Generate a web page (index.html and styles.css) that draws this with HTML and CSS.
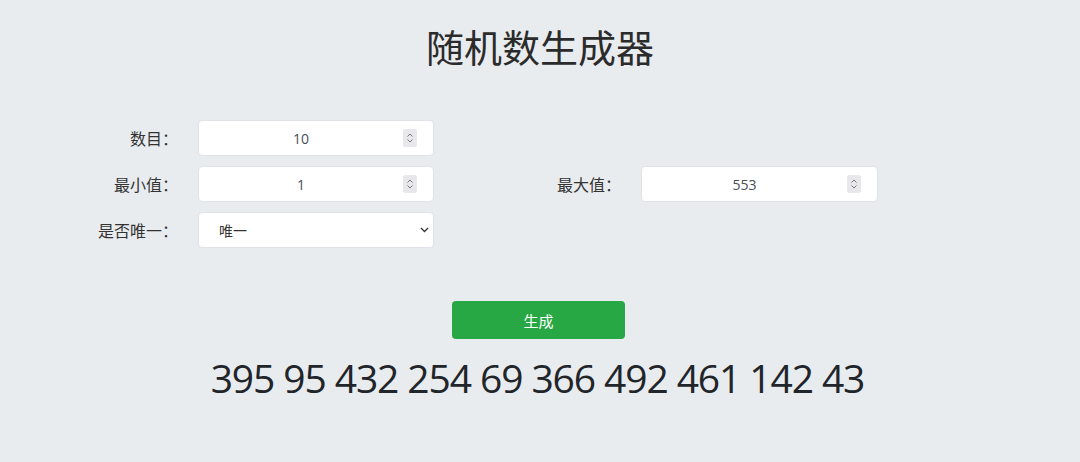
FILE: index.html
```html
<!DOCTYPE html>
<html lang="zh-CN">
<head>
    <meta charset="UTF-8">
    <meta name="viewport" content="width=device-width, initial-scale=1.0">
    <title>随机数生成器</title>
    <link rel="stylesheet" href="styles.css">
</head>
<body>
    <div class="page">
        <h1>随机数生成器</h1>

        <form class="options">
            <label class="label">数目：</label>
            <div class="box">
                <input type="text" class="num" value="10">
                <span class="spin">
                    <svg width="8" height="12" viewBox="0 0 8 12"><path d="M1.5 4.5 L4 2 L6.5 4.5 M1.5 7.5 L4 10 L6.5 7.5" fill="none" stroke="#7a7a7a" stroke-width="1"/></svg>
                </span>
            </div>

            <label class="label">最小值：</label>
            <div class="box">
                <input type="text" class="num" value="1">
                <span class="spin">
                    <svg width="8" height="12" viewBox="0 0 8 12"><path d="M1.5 4.5 L4 2 L6.5 4.5 M1.5 7.5 L4 10 L6.5 7.5" fill="none" stroke="#7a7a7a" stroke-width="1"/></svg>
                </span>
            </div>

            <label class="label right">最大值：</label>
            <div class="box">
                <input type="text" class="num" value="553">
                <span class="spin">
                    <svg width="8" height="12" viewBox="0 0 8 12"><path d="M1.5 4.5 L4 2 L6.5 4.5 M1.5 7.5 L4 10 L6.5 7.5" fill="none" stroke="#7a7a7a" stroke-width="1"/></svg>
                </span>
            </div>

            <label class="label">是否唯一：</label>
            <div class="box select-box">
                <span class="select-value">唯一</span>
                <svg width="9" height="6" viewBox="0 0 9 6"><path d="M1 1 L4.5 4.5 L8 1" fill="none" stroke="#333" stroke-width="1.3"/></svg>
            </div>
        </form>

        <div class="actions">
            <button type="button" class="btn-generate">生成</button>
        </div>

        <div class="result">395 95 432 254 69 366 492 461 142 43</div>
    </div>
</body>
</html>
```

FILE: styles.css
```css
body {
    margin: 0;
    padding: 0;
    background-color: #e9ecef;
    font-family: "Open Sans", "Noto Sans CJK SC", sans-serif;
    color: #333;
}

.page {
    width: 1080px;
    height: 462px;
    overflow: hidden;
}

h1 {
    margin: 23px 0 51px;
    text-align: center;
    font-family: "Noto Sans CJK SC", sans-serif;
    font-weight: 400;
    font-size: 38px;
    line-height: 46px;
    color: #2b2b2b;
}

.options {
    display: grid;
    grid-template-columns: 166px 236px 207px 237px;
    grid-auto-rows: 36px;
    row-gap: 10px;
    margin-left: 32px;
}

.label {
    grid-column: 1;
    padding-right: 20px;
    text-align: right;
    font-family: "Noto Sans CJK SC", sans-serif;
    font-size: 16px;
    line-height: 36px;
    color: #333;
}

.label.right {
    grid-column: 3;
}

.box {
    display: flex;
    align-items: center;
    background: #fff;
    border: 1px solid #dfe2e6;
    border-radius: 4px;
    box-sizing: border-box;
    padding-right: 16px;
}

.num {
    flex: 1;
    min-width: 0;
    border: none;
    outline: none;
    background: transparent;
    text-align: center;
    font-family: "Open Sans", sans-serif;
    font-size: 14px;
    color: #495057;
    padding: 0;
}

.spin {
    display: flex;
    align-items: center;
    justify-content: center;
    width: 14px;
    height: 18px;
    background: #e8e8ec;
    border-radius: 2px;
}

.select-box {
    justify-content: space-between;
    padding-left: 20px;
    padding-right: 4px;
}

.select-value {
    font-family: "Noto Sans CJK SC", sans-serif;
    font-size: 14px;
    color: #333;
}

.actions {
    display: flex;
    justify-content: center;
    margin-top: 53px;
    padding-right: 3px;
}

.btn-generate {
    width: 173px;
    height: 38px;
    background-color: #28a745;
    color: #fff;
    border: none;
    border-radius: 4px;
    font-family: "Noto Sans CJK SC", sans-serif;
    font-size: 15px;
}

.result {
    margin-top: 16px;
    text-align: center;
    font-family: "Open Sans", sans-serif;
    font-size: 39px;
    letter-spacing: -1.1px;
    line-height: 46px;
    color: #212529;
    padding-right: 5px;
}
```
